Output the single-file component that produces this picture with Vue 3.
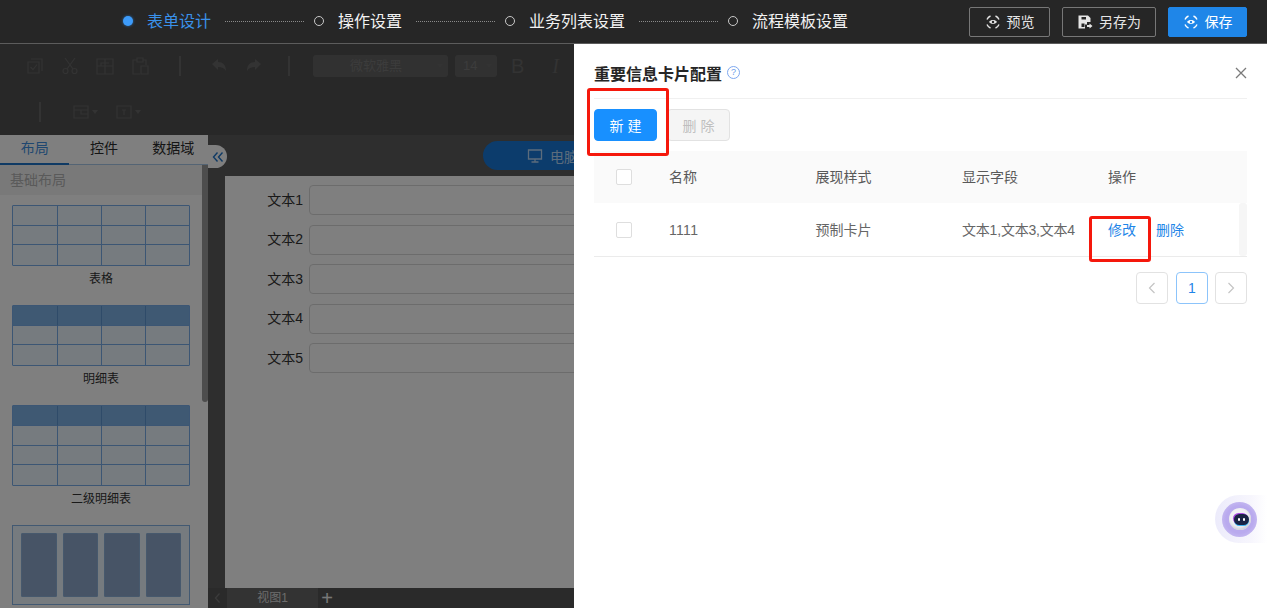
<template>
  <div class="page">
    <!-- top steps bar -->
    <header class="topbar">
      <div class="steps">
        <div v-for="(s, i) in steps" :key="s" class="step" :class="{ on: i === 0 }">
          <span class="dot"></span>
          <span class="step-name">{{ s }}</span>
          <span v-if="i < steps.length - 1" class="dots-line"></span>
        </div>
      </div>
      <div class="top-btns">
        <button class="top-btn preview">
          <svg width="16" height="16" viewBox="0 0 16 16" fill="none" stroke="currentColor" stroke-width="1.4">
            <path d="M2 5.5A6.5 6.5 0 0 1 5.5 2M10.5 2A6.5 6.5 0 0 1 14 5.5M14 10.5A6.5 6.5 0 0 1 10.5 14M5.5 14A6.5 6.5 0 0 1 2 10.5" />
            <path d="M4 8c2-2.6 6-2.6 8 0-2 2.6-6 2.6-8 0z" fill="currentColor" stroke="none" />
            <circle cx="8" cy="8" r="1.2" fill="#262626" stroke="none" />
          </svg>
          <span>预览</span>
        </button>
        <button class="top-btn saveas">
          <svg width="16" height="16" viewBox="0 0 16 16" fill="currentColor">
            <path d="M1.5 1.5H11L13.5 4v4H10v2.5H8v4H1.5z" />
            <path d="M4.5 3H9v2.5H4.5zM4.5 9.5h3V13h-3z" fill="#262626" />
            <path d="M10 11h2.5V9.5l3 2.5-3 2.5V13H10z" />
          </svg>
          <span>另存为</span>
        </button>
        <button class="top-btn save">
          <svg width="16" height="16" viewBox="0 0 16 16" fill="none" stroke="currentColor" stroke-width="1.4">
            <path d="M2 5.5A6.5 6.5 0 0 1 5.5 2M10.5 2A6.5 6.5 0 0 1 14 5.5M14 10.5A6.5 6.5 0 0 1 10.5 14M5.5 14A6.5 6.5 0 0 1 2 10.5" />
            <path d="M4 8c2-2.6 6-2.6 8 0-2 2.6-6 2.6-8 0z" fill="currentColor" stroke="none" />
            <circle cx="8" cy="8" r="1.2" fill="#1f86e8" stroke="none" />
          </svg>
          <span>保存</span>
        </button>
      </div>
    </header>

    <!-- editor toolbar -->
    <div class="toolbar">
      <div class="tool-row first">
        <svg class="tool" viewBox="0 0 20 20" fill="none" stroke="currentColor" stroke-width="1.2">
          <path d="M6 3h11v12M3 6h11v11H3z" /><path d="M5.5 11l2.5 2.5 4-5" />
        </svg>
        <svg class="tool" viewBox="0 0 20 20" fill="none" stroke="currentColor" stroke-width="1.2">
          <circle cx="5.5" cy="15" r="2.5" /><circle cx="14.5" cy="15" r="2.5" /><path d="M7 13L15 2M13 13L5 2" />
        </svg>
        <svg class="tool" viewBox="0 0 20 20" fill="none" stroke="currentColor" stroke-width="1.2">
          <path d="M2 3h16v15H2zM10 3v15M2 10h16M6 10V7h8" />
        </svg>
        <svg class="tool" viewBox="0 0 20 20" fill="none" stroke="currentColor" stroke-width="1.2">
          <path d="M7 4H3v14h7M13 4h3v5M7 2h6v4H7zM11 10h7v8h-7z" />
        </svg>
        <span class="sep s1"></span>
        <svg class="tool" viewBox="0 0 20 20" fill="currentColor">
          <path d="M3 8l6-5v3c5 0 8 3 8 9-2-3-4-4-8-4v3z" />
        </svg>
        <svg class="tool" viewBox="0 0 20 20" fill="currentColor">
          <path d="M17 8l-6-5v3c-5 0-8 3-8 9 2-3 4-4 8-4v3z" />
        </svg>
        <span class="sep s2"></span>
        <div class="fake-select font">微软雅黑<i></i></div>
        <div class="fake-select size">14<i></i></div>
        <span class="glyph b">B</span>
        <span class="glyph it">I</span>
      </div>
      <div class="tool-row second">
        <span class="sep s3"></span>
        <svg class="tool small" viewBox="0 0 16 16" fill="none" stroke="currentColor" stroke-width="1.2">
          <path d="M1 2h14v12H1zM1 6h14M8 6v4h7" />
        </svg>
        <i class="caret"></i>
        <svg class="tool small t2" viewBox="0 0 16 16" fill="none" stroke="currentColor" stroke-width="1.2">
          <path d="M1 2h14v12H1zM6 6h4M8 6v5" />
        </svg>
        <i class="caret"></i>
      </div>
    </div>

    <!-- left panel and canvas -->
    <div class="workspace">
      <aside class="side">
        <div class="tabs">
          <span v-for="(t, i) in tabs" :key="t" class="tab" :class="{ active: i === 0 }">{{ t }}</span>
        </div>
        <div class="side-body">
          <div class="side-scroll">
            <div class="band">基础布局</div>
            <div v-for="item in layouts" :key="item.name" class="layout-item">
              <div class="mini-table" :class="{ tall: item.rows === 4 }">
                <template v-for="r in item.rows" :key="r">
                  <div v-for="c in 4" :key="c" class="mini-cell" :class="{ head: item.head && r === 1 }"></div>
                </template>
              </div>
              <div class="layout-name">{{ item.name }}</div>
            </div>
            <div class="mini-cols">
              <div v-for="c in 4" :key="c" class="mini-col"></div>
            </div>
          </div>
          <div class="scroll-thumb"></div>
        </div>
      </aside>

      <main class="canvas">
        <div class="canvas-top">
          <div class="device-pill">
            <svg width="16" height="16" viewBox="0 0 16 16" fill="none" stroke="currentColor" stroke-width="1.3">
              <path d="M1.5 2h13v9h-13zM8 11v3M4.5 14h7" />
            </svg>
            <span>电脑</span>
          </div>
        </div>
        <div class="sheet">
          <div v-for="n in 5" :key="n" class="form-row">
            <label>文本{{ n }}</label>
            <div class="form-input"></div>
          </div>
        </div>
        <div class="view-bar">
          <svg class="view-prev" width="8" height="12" viewBox="0 0 8 12" fill="none" stroke="#777" stroke-width="1.2">
            <path d="M6 1.5L2 6l4 4.5" />
          </svg>
          <span class="view-tab">视图1</span>
          <span class="view-add">+</span>
        </div>
      </main>

      <div class="collapse">
        <svg width="12" height="12" viewBox="0 0 12 12" fill="none" stroke="currentColor" stroke-width="1.4">
          <path d="M5.5 1.5L1.5 6l4 4.5M10.5 1.5L6.5 6l4 4.5" />
        </svg>
      </div>
    </div>

    <div class="mask"></div>

    <!-- drawer -->
    <section class="drawer">
      <div class="drawer-head">
        <h3>重要信息卡片配置</h3>
        <span class="help">?</span>
        <svg class="close" width="12" height="12" viewBox="0 0 12 12" fill="none" stroke="#7a7a7a" stroke-width="1.3">
          <path d="M1 1l10 10M11 1L1 11" />
        </svg>
      </div>
      <div class="actions">
        <button class="btn primary">新 建</button>
        <button class="btn disabled">删 除</button>
      </div>
      <div class="table">
        <div class="tr thead">
          <div class="cell check"><span class="checkbox"></span></div>
          <div class="cell">名称</div>
          <div class="cell">展现样式</div>
          <div class="cell">显示字段</div>
          <div class="cell">操作</div>
        </div>
        <div v-for="row in rows" :key="row.name" class="tr tbody">
          <div class="cell check"><span class="checkbox"></span></div>
          <div class="cell num">{{ row.name }}</div>
          <div class="cell">{{ row.style }}</div>
          <div class="cell fields">{{ row.fields }}</div>
          <div class="cell ops">
            <a>修改</a>
            <a>删除</a>
          </div>
          <div class="row-scroll"></div>
        </div>
      </div>
      <div class="pager">
        <span class="page-btn">
          <svg width="10" height="12" viewBox="0 0 10 12" fill="none" stroke="#c4c4c4" stroke-width="1.2"><path d="M7.5 1L2.5 6l5 5" /></svg>
        </span>
        <span class="page-btn current">1</span>
        <span class="page-btn">
          <svg width="10" height="12" viewBox="0 0 10 12" fill="none" stroke="#c4c4c4" stroke-width="1.2"><path d="M2.5 1l5 5-5 5" /></svg>
        </span>
      </div>
      <div class="red-box box-new"></div>
      <div class="red-box box-edit"></div>
    </section>

    <!-- assistant float -->
    <div class="bot">
      <div class="bot-ring">
        <div class="bot-ball">
          <div class="bot-face"><i></i><i></i></div>
        </div>
      </div>
    </div>
  </div>
</template>

<script setup>
const steps = ['表单设计', '操作设置', '业务列表设置', '流程模板设置']
const tabs = ['布局', '控件', '数据域']

const layouts = [
  { name: '表格', rows: 3, head: false },
  { name: '明细表', rows: 3, head: true },
  { name: '二级明细表', rows: 4, head: true }
]

const rows = [{ name: '1111', style: '预制卡片', fields: '文本1,文本3,文本4' }]
</script>

<style>
html,
body {
  margin: 0;
  overflow: hidden;
}
</style>

<style scoped>
.page {
  position: relative;
  display: flex;
  flex-direction: column;
  width: 1267px;
  height: 608px;
  overflow: hidden;
  background: #505050;
  font-family: "Liberation Sans", "Noto Sans CJK SC", sans-serif;
  font-size: 14px;
}

.topbar {
  position: relative;
  z-index: 3;
  display: flex;
  flex: none;
  align-items: center;
  justify-content: space-between;
  height: 44px;
  box-sizing: border-box;
  padding: 0 20px 0 123px;
  border-bottom: 1px solid #5c5c5c;
  background: #262626;
}

.steps,
.step,
.top-btns {
  display: flex;
  align-items: center;
}

.steps {
  margin-top: -1px;
}

.step {
  color: #f2f2f2;
  font-size: 16px;
}

.step-name {
  padding-bottom: 2px;
}

.step .dot {
  box-sizing: border-box;
  width: 10px;
  height: 10px;
  margin-right: 14px;
  border: 1px solid #c8c8c8;
  border-radius: 50%;
}

.step.on {
  color: #3a91ea;
}

.step.on .dot {
  border: 0;
  background: #3d9bfa;
  box-shadow: 0 0 3px #2a6db0;
}

.dots-line {
  width: 79px;
  height: 1px;
  margin: 1px 10px 0 14px;
  background: linear-gradient(90deg, #8a8a8a 50%, transparent 50%) 0 0 / 2px 1px repeat-x;
}

.top-btns {
  gap: 12px;
}

.top-btn {
  display: flex;
  align-items: center;
  justify-content: center;
  gap: 6px;
  height: 30px;
  box-sizing: border-box;
  border: 1px solid #777;
  border-radius: 2px;
  background: transparent;
  color: #e6e6e6;
  font-family: inherit;
  font-size: 14px;
}

.top-btn span {
  padding-bottom: 2px;
}

.top-btn.preview {
  width: 81px;
}

.top-btn.saveas {
  width: 94px;
}

.top-btn.save {
  width: 79px;
  border-color: #1f86e8;
  background: #1f86e8;
  color: #fff;
}

.toolbar {
  flex: none;
  height: 91px;
  background: #505050;
  color: #666;
}

.tool-row {
  display: flex;
  align-items: center;
}

.tool-row.first {
  height: 44px;
  padding: 0 0 0 25px;
}

.tool-row.first .tool {
  margin-right: 15px;
}

.tool-row.second {
  height: 47px;
  padding-left: 39px;
}

.tool {
  flex: none;
  width: 20px;
  height: 20px;
}

.tool.small {
  width: 16px;
  height: 16px;
  margin-left: 32px;
}

.tool.small.t2 {
  margin-left: 18px;
}

.caret {
  width: 0;
  height: 0;
  margin-left: 3px;
  border-top: 4px solid #666;
  border-right: 3px solid transparent;
  border-left: 3px solid transparent;
}

.sep {
  flex: none;
  width: 2px;
  height: 20px;
  background: #666;
}

.sep.s1 {
  margin: 0 28px 0 14px;
}

.sep.s2 {
  margin: 0 23px 0 9px;
}

.fake-select {
  position: relative;
  box-sizing: border-box;
  height: 22px;
  border-radius: 3px;
  background: #636363;
  color: #787878;
  font-size: 13px;
  line-height: 22px;
}

.fake-select i {
  position: absolute;
  top: 9px;
  right: 5px;
  border-top: 4px solid #666;
  border-right: 3px solid transparent;
  border-left: 3px solid transparent;
}

.fake-select.font {
  width: 135px;
  margin-right: 7px;
  padding-left: 37px;
}

.fake-select.size {
  width: 42px;
  margin-right: 14px;
  padding-left: 8px;
}

.glyph {
  font-size: 20px;
  line-height: 1;
}

.glyph.b {
  margin-right: 28px;
}

.glyph.it {
  font-family: "Liberation Serif", serif;
  font-style: italic;
}

.workspace {
  position: relative;
  display: flex;
  flex: 1;
  min-height: 0;
}

.side {
  display: flex;
  flex: none;
  flex-direction: column;
  width: 208px;
  background: #fff;
}

.tabs {
  display: flex;
  flex: none;
  height: 30px;
  box-sizing: border-box;
  border-bottom: 1px solid #a9c8e8;
}

.tab {
  flex: 1;
  margin-bottom: -1px;
  color: #2b2b2b;
  line-height: 26px;
  text-align: center;
}

.tab.active {
  border-bottom: 2px solid #1f74c9;
  color: #3f8fe0;
}

.side-body {
  display: flex;
  flex: 1;
  min-height: 0;
}

.side-scroll {
  flex: 1;
  min-width: 0;
  overflow: hidden;
}

.scroll-thumb {
  flex: none;
  width: 6px;
  height: 237px;
  border-radius: 0 0 3px 3px;
  background: #9a9a9a;
}

.band {
  height: 30px;
  margin-bottom: 10px;
  padding-left: 10px;
  background: #f3f3f3;
  color: #b4b4b4;
  line-height: 30px;
}

.layout-item {
  margin-bottom: 18px;
  text-align: center;
}

.layout-name {
  width: 178px;
  margin: 5px 0 0 12px;
  color: #333;
  font-size: 12px;
  line-height: 16px;
}

.mini-table {
  display: grid;
  grid-template-columns: repeat(4, 1fr);
  grid-auto-rows: 1fr;
  box-sizing: border-box;
  width: 178px;
  height: 61px;
  margin-left: 12px;
  border: 1px solid #78ade8;
  border-radius: 1px;
  background: #ecf6ff;
}

.mini-table.tall {
  height: 81px;
}

.mini-cell {
  border-bottom: 1px solid #78ade8;
  border-left: 1px solid #78ade8;
}

.mini-cell:nth-child(4n + 1) {
  border-left: 0;
}

.mini-cell:nth-last-child(-n + 4) {
  border-bottom: 0;
}

.mini-cell.head {
  border-left-color: #5f96d2;
  background: #7fb2e6;
}

.mini-cols {
  display: flex;
  gap: 6px;
  box-sizing: border-box;
  width: 178px;
  height: 80px;
  padding: 7px 8px;
  margin-left: 12px;
  border: 1px solid #85b2e4;
  background: #ecf6ff;
}

.mini-col {
  flex: 1;
  border: 1px solid #8fb2da;
  border-radius: 1px;
  background: #8ea8cc;
}

.canvas {
  display: flex;
  flex: 1;
  flex-direction: column;
  min-width: 0;
  background-color: #5c5c5c;
  background-image: radial-gradient(#6c6c6c 0.7px, transparent 0.7px);
  background-size: 4px 4px;
}

.canvas-top {
  flex: none;
  height: 41px;
  box-sizing: border-box;
  padding: 6px 0 0 275px;
}

.device-pill {
  display: flex;
  align-items: center;
  gap: 7px;
  width: 220px;
  height: 29px;
  box-sizing: border-box;
  padding-left: 44px;
  border-radius: 15px;
  background: #1878d8;
  color: #b8d8f8;
}

.sheet {
  flex: 1;
  margin-left: 17px;
  padding-top: 9px;
  background: #fff;
}

.form-row {
  display: flex;
  align-items: center;
  gap: 6px;
  margin-bottom: 9.5px;
}

.form-row label {
  flex: none;
  width: 78px;
  box-sizing: border-box;
  padding-bottom: 3px;
  color: #333;
  text-align: right;
}

.form-input {
  flex: 1;
  height: 30px;
  box-sizing: border-box;
  border: 1px solid #d9d9d9;
  border-radius: 4px;
  background: #fff;
}

.view-bar {
  display: flex;
  flex: none;
  align-items: center;
  height: 20px;
  background: #555;
  color: #d8d8d8;
  font-size: 12px;
}

.view-prev {
  width: 19px;
}

.view-tab {
  width: 91px;
  background-color: #666;
  line-height: 20px;
  text-align: center;
}

.view-add {
  width: 18px;
  color: #eee;
  font-size: 20px;
  line-height: 20px;
  text-align: center;
}

.collapse {
  position: absolute;
  top: 10px;
  left: 208px;
  display: flex;
  align-items: center;
  justify-content: center;
  width: 19px;
  height: 23px;
  border-radius: 0 12px 12px 0;
  background: #fff;
  color: #1f74c9;
}

.mask {
  position: absolute;
  inset: 44px 0 0 0;
  z-index: 1;
  background: rgba(0, 0, 0, 0.5);
}

.drawer {
  position: absolute;
  top: 44px;
  right: 0;
  bottom: 0;
  left: 574px;
  z-index: 2;
  box-sizing: border-box;
  padding: 0 20px;
  background: #fff;
}

.drawer-head {
  display: flex;
  align-items: center;
  height: 55px;
  box-sizing: border-box;
  padding-top: 3px;
  border-bottom: 1px solid #f0f0f0;
}

.drawer-head h3 {
  margin: 0;
  color: #262626;
  font-size: 16px;
  font-weight: 700;
}

.help {
  width: 13px;
  height: 13px;
  box-sizing: border-box;
  margin-left: 5px;
  border: 1px solid #7ea8ef;
  border-radius: 50%;
  color: #6d9bea;
  font-size: 9px;
  line-height: 11px;
  text-align: center;
}

.close {
  margin-left: auto;
}

.actions {
  display: flex;
  gap: 10px;
  padding: 10px 0;
}

.btn {
  width: 63px;
  height: 32px;
  box-sizing: border-box;
  border-radius: 4px;
  font-family: inherit;
  font-size: 14px;
}

.btn.primary {
  border: 1px solid #1890ff;
  background: #1890ff;
  color: #fff;
}

.btn.disabled {
  border: 1px solid #e2e2e2;
  background: #f5f5f5;
  color: #bfbfbf;
}

.tr {
  position: relative;
  display: grid;
  grid-template-columns: 75px 146.5px 146.5px 146px 1fr;
  align-items: center;
  box-sizing: border-box;
}

.thead {
  height: 52px;
  background: #fafafa;
  color: #595959;
}

.thead .cell:not(.check),
.tbody .cell:not(.check, .num) {
  padding-bottom: 2px;
}

.tbody {
  height: 54px;
  border-bottom: 1px solid #ebebeb;
  color: #666;
}

.num {
  letter-spacing: 0.3px;
}

.fields {
  letter-spacing: -0.2px;
}

.cell.check {
  padding-left: 22px;
}

.checkbox {
  display: block;
  width: 16px;
  height: 16px;
  box-sizing: border-box;
  border: 1px solid #dedede;
  border-radius: 2px;
  background: #fff;
}

.ops {
  display: flex;
  gap: 20px;
  color: #1f86e8;
}

.row-scroll {
  position: absolute;
  top: 0;
  right: 0;
  bottom: 0;
  width: 8px;
  border-radius: 3px;
  background: #f6f6f6;
}

.pager {
  display: flex;
  justify-content: flex-end;
  gap: 8px;
  margin-top: 15px;
}

.page-btn {
  display: flex;
  align-items: center;
  justify-content: center;
  width: 32px;
  height: 32px;
  box-sizing: border-box;
  border: 1px solid #e2e2e2;
  border-radius: 4px;
}

.page-btn:last-child {
  margin-left: -1px;
}

.page-btn.current {
  border-color: #8cc4fb;
  color: #1f86e8;
}

.red-box {
  position: absolute;
  box-sizing: border-box;
  border: 3px solid #f5180c;
  border-radius: 3px;
}

.box-new {
  top: 44px;
  left: 13px;
  width: 82px;
  height: 68px;
}

.box-edit {
  top: 172px;
  left: 515px;
  width: 62px;
  height: 46px;
}

.bot {
  position: absolute;
  top: 495px;
  right: 0;
  z-index: 4;
  display: flex;
  align-items: center;
  width: 52px;
  height: 48px;
  padding-left: 7px;
  box-sizing: border-box;
  border-radius: 24px 0 0 24px;
  background: linear-gradient(90deg, #ecebfb, #f7f6fd 70%, #fff);
}

.bot-ring {
  display: flex;
  align-items: center;
  justify-content: center;
  width: 35px;
  height: 35px;
  border-radius: 50%;
  background: radial-gradient(circle, #b9aaee 55%, #d3cbf4 100%);
}

.bot-ball {
  display: flex;
  align-items: center;
  justify-content: center;
  width: 22px;
  height: 22px;
  border-radius: 50%;
  background: #f1f1f4;
  box-shadow: inset -1px -2px 3px #cfcfd8;
}

.bot-face {
  display: flex;
  align-items: center;
  justify-content: center;
  gap: 3px;
  width: 15px;
  height: 11px;
  margin-left: 3px;
  border-radius: 6px;
  background: #1a2444;
  box-shadow: -1px -1px 0 #a94ce0, 0 1px 0 #3fb4f0;
}

.bot-face i {
  width: 2px;
  height: 3px;
  border-radius: 1px;
  background: #fff;
}
</style>
